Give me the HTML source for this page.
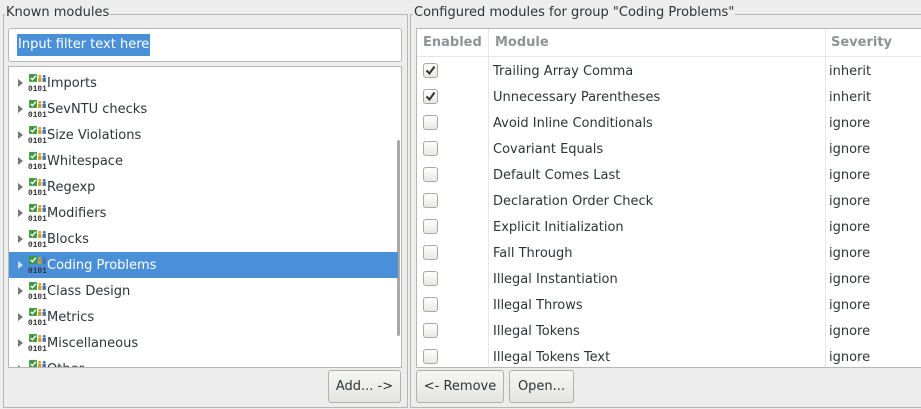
<!DOCTYPE html><html><head><style>
body{margin:0;width:921px;height:409px;background:#ededed;font-family:"DejaVu Sans","Liberation Sans",sans-serif;font-size:13px;color:#2e3436;position:relative;overflow:hidden}
.a{position:absolute}
.gb{position:absolute;border:1px solid #b6b6b3}
.lg{position:absolute;background:#ededed;padding:0 1px;line-height:16px;color:#2e3436}
.box{position:absolute;background:#fff;border:1px solid #b6b6b3}
.row{position:absolute;left:0;height:26px;line-height:26px;width:100%}
.tri{position:absolute;left:9px;top:9px;width:0;height:0;border-left:5px solid #777;border-top:4px solid transparent;border-bottom:4px solid transparent}
.ic{position:absolute;left:19px;top:4px;width:19px;height:18px}
.lbl{position:absolute;left:38px}
.btn{position:absolute;border:1px solid #b0b0ac;border-radius:3px;background:linear-gradient(#f6f6f5,#e4e4e2);text-align:center;line-height:31px;height:31px}
.cb{position:absolute;left:6px;top:6px;width:13px;height:13px;border:1px solid #a8a8a5;border-radius:3px;background:linear-gradient(#fff,#e8e8e6)}
.r{position:absolute;left:0;width:505px;height:26px;line-height:26px}
</style></head><body>
<div class="gb" style="left:3px;top:14px;width:403px;height:392px"></div>
<div class="lg" style="left:5px;top:5px">Known modules</div>
<div class="box" style="left:8px;top:28px;width:392px;height:32px;border-radius:3px"><span class="a" style="left:8px;top:5px;background:#4a90d9;color:#fff;line-height:22px;padding:0 1px">Input filter text here</span></div>
<div class="box" style="left:8px;top:66px;width:392px;height:300px;overflow:hidden">
<div class="a" style="left:388px;top:73px;width:3px;height:196px;background:#a8a8a8;border-radius:2px"></div>
<div id="tree"></div>
</div>
<div class="btn" style="left:328px;top:370px;width:71px">Add... -&gt;</div>

<div class="gb" style="left:410px;top:14px;width:514px;height:392px"></div>
<div class="lg" style="left:413px;top:5px">Configured modules for group "Coding Problems"</div>
<div class="box" style="left:416px;top:28px;width:510px;height:338px;overflow:hidden">
<div class="a" style="left:0;top:0;width:510px;height:27px;border-bottom:1px solid #e6e6e6;line-height:27px;color:#8f9396;font-weight:bold">
<span class="a" style="left:6px">Enabled</span><span class="a" style="left:78px">Module</span><span class="a" style="left:414px">Severity</span></div>
<div class="a" style="left:71px;top:0;width:1px;height:338px;background:#e6e6e6"></div>
<div class="a" style="left:408px;top:0;width:1px;height:338px;background:#e6e6e6"></div>
<div id="tbl"></div>
</div>
<div class="btn" style="left:416px;top:370px;width:86px">&lt;- Remove</div>
<div class="btn" style="left:509px;top:370px;width:63px">Open...</div>
<script>
var icon='<svg class="ic" viewBox="0 0 17 16"><rect x="1" y="0" width="7" height="7" fill="#3a9a3a"/><path d="M2.5 3.5l1.5 1.5 3-3.5" stroke="#fff" fill="none" stroke-width="1.3"/><circle cx="10.5" cy="2" r="1.3" fill="#c9a227"/><circle cx="14.5" cy="2" r="1.3" fill="#4a6fb0"/><rect x="9" y="3.5" width="3" height="3.5" fill="#c9a227"/><rect x="13" y="3.5" width="3" height="3.5" fill="#4a6fb0"/><text x="0" y="15" font-size="7" font-family="Liberation Mono" font-weight="bold" fill="#333">0101</text></svg>';
var t=["Imports","SevNTU checks","Size Violations","Whitespace","Regexp","Modifiers","Blocks","Coding Problems","Class Design","Metrics","Miscellaneous","Other"],h="";
t.forEach(function(n,i){var s=i==7;h+='<div class="row" style="top:'+(3+i*26)+'px;'+(s?'background:#4a90d9;color:#fff;width:389px':'')+'"><div class="tri" style="'+(s?'border-left-color:#cfe0f3':'')+'"></div>'+icon+'<span class="lbl" style="top:1px">'+n+'</span></div>'});
document.getElementById('tree').innerHTML=h;
var m=["Trailing Array Comma","Unnecessary Parentheses","Avoid Inline Conditionals","Covariant Equals","Default Comes Last","Declaration Order Check","Explicit Initialization","Fall Through","Illegal Instantiation","Illegal Throws","Illegal Tokens","Illegal Tokens Text"];h="";
m.forEach(function(n,i){var c=i<2;h+='<div class="r" style="top:'+(29+i*26)+'px"><div class="cb" style="top:5px">'+(c?'<svg width="13" height="13" viewBox="0 0 13 13" style="position:absolute;left:0;top:0"><path d="M2.5 6.5l3 3 5-7" stroke="#333" stroke-width="2" fill="none"/></svg>':'')+'</div><span class="a" style="left:76px;top:1px">'+n+'</span><span class="a" style="left:412px;top:1px">'+(c?'inherit':'ignore')+'</span></div>'});
document.getElementById('tbl').innerHTML=h;
</script>
</body></html>
